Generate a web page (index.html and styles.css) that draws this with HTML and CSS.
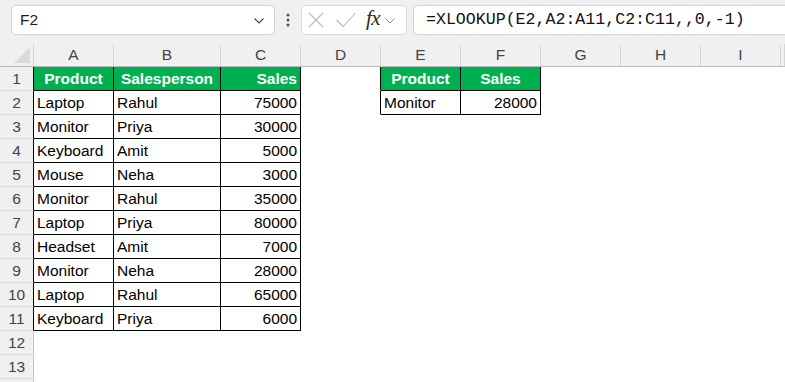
FILE: index.html
```html
<!DOCTYPE html>
<html>
<head>
<meta charset="utf-8">
<link rel="stylesheet" href="styles.css">
</head>
<body>
<div class="toolbar">
  <div class="namebox">
    <span class="ref">F2</span>
    <svg class="chev" width="10" height="6" viewBox="0 0 10 6"><path d="M0.5 0.5 L5 5 L9.5 0.5" fill="none" stroke="#444" stroke-width="1.1"/></svg>
  </div>
  <div class="dots">
    <svg width="4" height="14" viewBox="0 0 4 14"><circle cx="2" cy="2" r="1.5" fill="#555"/><circle cx="2" cy="7" r="1.5" fill="#555"/><circle cx="2" cy="12" r="1.5" fill="#555"/></svg>
  </div>
  <div class="fxbox">
    <svg class="ico-x" width="16" height="16" viewBox="0 0 16 16"><path d="M1 1 L15 15 M15 1 L1 15" stroke="#b8b8b8" stroke-width="1.1" fill="none"/></svg>
    <svg class="ico-ok" width="20" height="16" viewBox="0 0 20 16"><path d="M0.5 8 L7 14.5 L19.5 1" stroke="#b8b8b8" stroke-width="1.1" fill="none"/></svg>
    <span class="fx">fx</span>
    <svg class="chev2" width="10" height="6" viewBox="0 0 10 6"><path d="M0.5 0.5 L5 5 L9.5 0.5" fill="none" stroke="#8a8a8a" stroke-width="1"/></svg>
  </div>
  <div class="formula">=XLOOKUP(E2,A2:A11,C2:C11,,0,-1)</div>
</div>

<div class="sheet">
  <div class="row head">
    <div class="corner"><span class="tri"></span></div>
    <div class="ch">A</div><div class="ch">B</div><div class="ch">C</div><div class="ch">D</div><div class="ch">E</div><div class="ch">F</div><div class="ch">G</div><div class="ch">H</div><div class="ch">I</div><div class="ch"></div>
  </div>
  <div class="row">
    <div class="rh edge">1</div>
    <div class="c t g ctr">Product</div><div class="c t g ctr">Salesperson</div><div class="c t g num">Sales</div>
    <div class="c be"></div><div class="c t g ctr">Product</div><div class="c t g ctr">Sales</div><div class="c"></div><div class="c"></div><div class="c"></div><div class="c"></div>
  </div>
  <div class="row">
    <div class="rh edge">2</div>
    <div class="c t">Laptop</div><div class="c t">Rahul</div><div class="c t num">75000</div>
    <div class="c be"></div><div class="c t">Monitor</div><div class="c t num">28000</div><div class="c"></div><div class="c"></div><div class="c"></div><div class="c"></div>
  </div>
  <div class="row">
    <div class="rh edge">3</div>
    <div class="c t">Monitor</div><div class="c t">Priya</div><div class="c t num">30000</div>
    <div class="c"></div><div class="c"></div><div class="c"></div><div class="c"></div><div class="c"></div><div class="c"></div><div class="c"></div>
  </div>
  <div class="row">
    <div class="rh edge">4</div>
    <div class="c t">Keyboard</div><div class="c t">Amit</div><div class="c t num">5000</div>
    <div class="c"></div><div class="c"></div><div class="c"></div><div class="c"></div><div class="c"></div><div class="c"></div><div class="c"></div>
  </div>
  <div class="row">
    <div class="rh edge">5</div>
    <div class="c t">Mouse</div><div class="c t">Neha</div><div class="c t num">3000</div>
    <div class="c"></div><div class="c"></div><div class="c"></div><div class="c"></div><div class="c"></div><div class="c"></div><div class="c"></div>
  </div>
  <div class="row">
    <div class="rh edge">6</div>
    <div class="c t">Monitor</div><div class="c t">Rahul</div><div class="c t num">35000</div>
    <div class="c"></div><div class="c"></div><div class="c"></div><div class="c"></div><div class="c"></div><div class="c"></div><div class="c"></div>
  </div>
  <div class="row">
    <div class="rh edge">7</div>
    <div class="c t">Laptop</div><div class="c t">Priya</div><div class="c t num">80000</div>
    <div class="c"></div><div class="c"></div><div class="c"></div><div class="c"></div><div class="c"></div><div class="c"></div><div class="c"></div>
  </div>
  <div class="row">
    <div class="rh edge">8</div>
    <div class="c t">Headset</div><div class="c t">Amit</div><div class="c t num">7000</div>
    <div class="c"></div><div class="c"></div><div class="c"></div><div class="c"></div><div class="c"></div><div class="c"></div><div class="c"></div>
  </div>
  <div class="row">
    <div class="rh edge">9</div>
    <div class="c t">Monitor</div><div class="c t">Neha</div><div class="c t num">28000</div>
    <div class="c"></div><div class="c"></div><div class="c"></div><div class="c"></div><div class="c"></div><div class="c"></div><div class="c"></div>
  </div>
  <div class="row">
    <div class="rh edge">10</div>
    <div class="c t">Laptop</div><div class="c t">Rahul</div><div class="c t num">65000</div>
    <div class="c"></div><div class="c"></div><div class="c"></div><div class="c"></div><div class="c"></div><div class="c"></div><div class="c"></div>
  </div>
  <div class="row">
    <div class="rh edge">11</div>
    <div class="c t">Keyboard</div><div class="c t">Priya</div><div class="c t num">6000</div>
    <div class="c"></div><div class="c"></div><div class="c"></div><div class="c"></div><div class="c"></div><div class="c"></div><div class="c"></div>
  </div>
  <div class="row">
    <div class="rh">12</div>
    <div class="c"></div><div class="c"></div><div class="c"></div><div class="c"></div><div class="c"></div><div class="c"></div><div class="c"></div><div class="c"></div><div class="c"></div><div class="c"></div>
  </div>
  <div class="row">
    <div class="rh">13</div>
    <div class="c"></div><div class="c"></div><div class="c"></div><div class="c"></div><div class="c"></div><div class="c"></div><div class="c"></div><div class="c"></div><div class="c"></div><div class="c"></div>
  </div>
  <div class="row short">
    <div class="rh"></div>
    <div class="c"></div><div class="c"></div><div class="c"></div><div class="c"></div><div class="c"></div><div class="c"></div><div class="c"></div><div class="c"></div><div class="c"></div><div class="c"></div>
  </div>
</div>
</body>
</html>
```

FILE: styles.css
```css
* { box-sizing: border-box; }
html, body {
  margin: 0;
  padding: 0;
  background: #ffffff;
  overflow: hidden;
  width: 785px;
  height: 382px;
}
body {
  font-family: "Liberation Sans", Arial, sans-serif;
  color: #000;
}

/* ---------- formula bar ---------- */
.toolbar {
  height: 44px;
  background: #f0f0f0;
  display: flex;
  align-items: flex-start;
  padding: 5px 0 0 11px;
  overflow: hidden;
}
.namebox {
  width: 264px;
  height: 30px;
  background: #fff;
  border: 1px solid #d3d3d3;
  border-radius: 5px;
  display: flex;
  align-items: center;
  justify-content: space-between;
  padding: 0 10px 0 8px;
  flex: none;
}
.ref {
  font-size: 15.5px;
  color: #1f1f1f;
}
.chev { display: block; margin-top: 1px; }
.dots {
  width: 26px;
  height: 30px;
  display: flex;
  align-items: center;
  justify-content: center;
  flex: none;
}
.dots svg { display: block; }
.fxbox {
  width: 106px;
  height: 30px;
  background: #fff;
  border: 1px solid #d9d9d9;
  border-radius: 5px;
  display: flex;
  align-items: center;
  padding-left: 6px;
  flex: none;
}
.ico-x { display: block; margin-right: 12px; }
.ico-ok { display: block; margin-right: 10px; }
.fx {
  font-family: "Liberation Serif", "Times New Roman", serif;
  font-style: italic;
  font-size: 21px;
  color: #2b2b2b;
  line-height: 1;
  margin-top: -3px;
  letter-spacing: -0.5px;
}
.chev2 { display: block; margin-left: 5px; margin-top: 2px; }
.formula {
  margin-left: 6px;
  width: 420px;
  height: 30px;
  background: #fff;
  border: 1px solid #d3d3d3;
  border-radius: 5px;
  flex: none;
  font-family: "Liberation Mono", "Courier New", monospace;
  font-size: 16.6px;
  line-height: 28px;
  padding-left: 12px;
  color: #111;
  white-space: nowrap;
}

/* ---------- sheet grid ---------- */
.sheet { background: #fff; }
.row {
  display: grid;
  grid-template-columns: 34px 80px 107px 80px 80px 80px 80px 80px 80px 80px 1fr;
  height: 24px;
}
.row.short { height: 4px; }
.row.head {
  height: 23px;
  background: #f0f0f0;
}
.corner {
  position: relative;
  border-right: 1px solid #d2d2d2;
  border-bottom: 1px solid #b9b9b9;
}
.tri {
  position: absolute;
  right: 3px;
  bottom: 3px;
  width: 0;
  height: 0;
  border-left: 16px solid transparent;
  border-bottom: 16px solid #dadada;
}
.ch {
  border-right: 1px solid #d6d6d6;
  border-bottom: 1px solid #b9b9b9;
  text-align: center;
  font-size: 15.5px;
  line-height: 22px;
  color: #444;
}
.rh {
  background: #f0f0f0;
  border-right: 1px solid #c4c4c4;
  border-bottom: 1px solid #dcdcdc;
  text-align: center;
  font-size: 15.5px;
  line-height: 23px;
  color: #444;
}
.rh.edge { border-right-color: #000; }

.c {
  border-right: 1px solid transparent;
  border-bottom: 1px solid transparent;
  font-size: 15.5px;
  line-height: 23px;
  padding: 0 3px;
  white-space: nowrap;
  overflow: hidden;
}
.c.t {
  border-right-color: #000;
  border-bottom-color: #000;
}
.c.be { border-right-color: #000; }
.c.g {
  background: #00b050;
  color: #fff;
  font-weight: bold;
}
.ctr { text-align: center; }
.num { text-align: right; }
```
